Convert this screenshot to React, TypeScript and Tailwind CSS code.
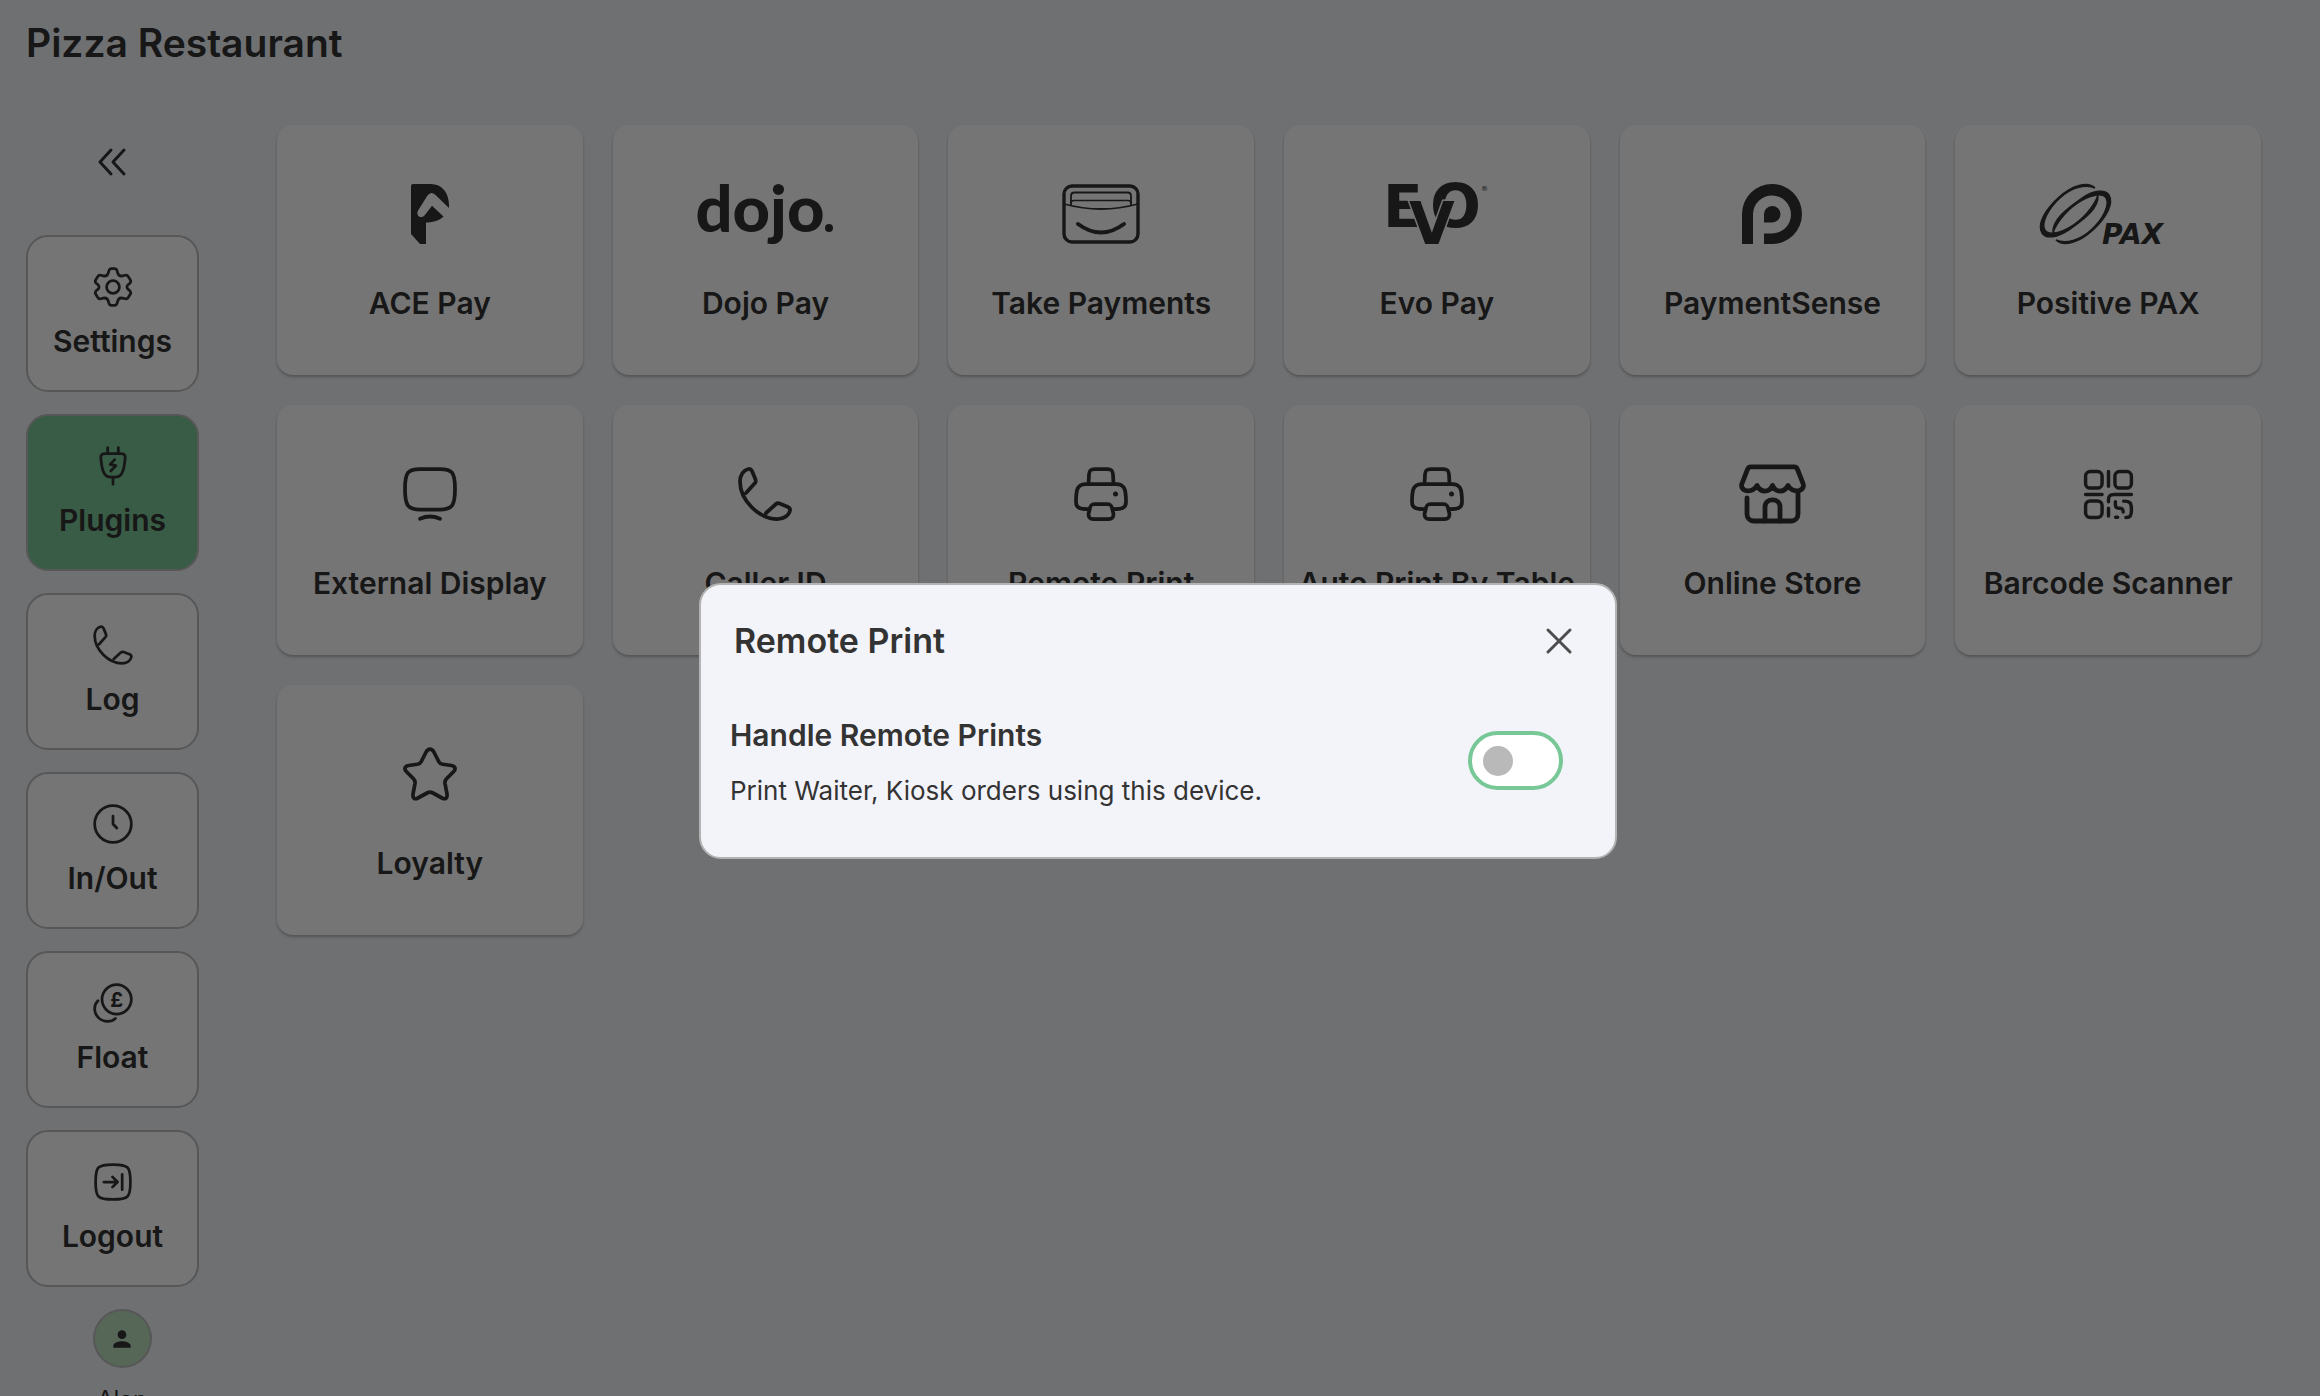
import React, { useState } from 'react';
import clsx from 'clsx';

type IconProps = { className?: string };

const StrokeIcon: React.FC<IconProps & { children: React.ReactNode }> = ({ className, children }) => (
  <svg
    viewBox="0 0 24 24"
    fill="none"
    stroke="currentColor"
    strokeWidth="1.5"
    strokeLinecap="round"
    strokeLinejoin="round"
    aria-hidden="true"
    className={clsx('shrink-0', className)}
  >
    {children}
  </svg>
);

const SettingsIcon = (props: IconProps) => (
  <StrokeIcon {...props}>
    <circle cx="12" cy="12" r="3.5" />
    <path d="M12 2H12.8C13.6 2 14 2.4 14.2 3.1L14.6 4.4C15 5.7 16.1 6.2 17.3 5.9L18.6 5.6C19.4 5.4 19.9 5.6 20.3 6.3L21.4 8C21.9 8.8 21.8 9.3 21.2 9.9L20.2 10.8C19.4 11.5 19.4 12.5 20.2 13.2L21.2 14.1C21.8 14.7 21.9 15.2 21.4 16L20.3 17.7C19.9 18.4 19.4 18.6 18.6 18.4L17.3 18.1C16.1 17.8 15 18.3 14.6 19.6L14.2 20.9C14 21.6 13.6 22 12.8 22H11.2C10.4 22 10 21.6 9.8 20.9L9.4 19.6C9 18.3 7.9 17.8 6.7 18.1L5.4 18.4C4.6 18.6 4.1 18.4 3.7 17.7L2.6 16C2.1 15.2 2.2 14.7 2.8 14.1L3.8 13.2C4.6 12.5 4.6 11.5 3.8 10.8L2.8 9.9C2.2 9.3 2.1 8.8 2.6 8L3.7 6.3C4.1 5.6 4.6 5.4 5.4 5.6L6.7 5.9C7.9 6.2 9 5.7 9.4 4.4L9.8 3.1C10 2.4 10.4 2 11.2 2Z" />
  </StrokeIcon>
);

const PlugIcon = (props: IconProps) => (
  <StrokeIcon {...props}>
    <path d="M9.1 2V5M14.9 2V5M12 18V22" />
    <path d="M8 5.2H16C18 5.2 18.8 5.8 18.6 8C18.2 12.5 17.5 18 13.5 18H10.5C6.5 18 5.8 12.5 5.4 8C5.2 5.8 6 5.2 8 5.2Z" />
    <path d="M12.9 8.5L10.4 11.1L13.6 11.8L10.8 14.7" />
  </StrokeIcon>
);

const PhoneIcon = (props: IconProps) => (
  <StrokeIcon {...props}>
    <path d="M4.4 11.6L8 7.6C8.4 7.1 8.4 6.8 8.2 6.2L6.9 3C6.6 2.4 6.2 1.8 5.4 2C3.4 2.4 2 4.5 2 7C2 14.5 9.5 22 17 22C19.5 22 21.6 20.6 22 18.6C22.2 17.8 21.6 17.4 21 17.1L17.8 15.8C17.2 15.6 16.9 15.6 16.4 16L12.4 19.6" />
  </StrokeIcon>
);

const ClockIcon = (props: IconProps) => (
  <StrokeIcon {...props}>
    <circle cx="12" cy="12" r="10" />
    <path d="M12 7.7V12L14.1 14.2" />
  </StrokeIcon>
);

const CoinsIcon = (props: IconProps) => (
  <StrokeIcon {...props}>
    <circle cx="14" cy="10" r="8" />
    <path d="M3.8 10.8C2.6 12 2 13.4 2 15C2 18.9 5.1 22 9 22C10.6 22 12.1 21.5 13.3 20.4" />
    <text x="14" y="14" textAnchor="middle" fontSize="11" fontWeight="700" fill="currentColor" stroke="none">£</text>
  </StrokeIcon>
);

const LogoutIcon = (props: IconProps) => (
  <StrokeIcon {...props}>
    <path d="M2.5 12C2.5 3.6 3.6 2.5 12 2.5S21.5 3.6 21.5 12S20.4 21.5 12 21.5S2.5 20.4 2.5 12Z" />
    <path d="M7 12H14.5M11.7 9.2L14.5 12L11.7 14.8M17 7.8V16.2" />
  </StrokeIcon>
);

const DisplayIcon = (props: IconProps) => (
  <StrokeIcon {...props}>
    <path d="M2 10C2 3.2 3.2 2 8 2H16C20.8 2 22 3.2 22 10S20.8 18.2 16 18.2H8C3.2 18.2 2 16.8 2 10Z" />
    <path d="M8 21.9Q12 20.1 16 21.9" />
  </StrokeIcon>
);

const PrinterIcon = (props: IconProps) => (
  <StrokeIcon {...props}>
    <path d="M7 8L7.2 4.2C7.3 2.5 8 2 9.5 2H14.5C16 2 16.7 2.5 16.8 4.2L17 8" />
    <path d="M7 18C4 18 2 17.8 2 15.2C2 10 2.6 8 6 8H18C21.4 8 22 10 22 15.2C22 17.8 20 18 17 18" />
    <path d="M9.7 16H14.3C15.7 16 16.2 16.4 16.4 17.6L17 20C17 21.6 16.4 22 15 22H9C7.6 22 7 21.6 7 20L7.6 17.6C7.8 16.4 8.3 16 9.7 16Z" />
    <circle cx="17.8" cy="12" r="1" fill="currentColor" stroke="none" />
  </StrokeIcon>
);

const QrIcon = (props: IconProps) => (
  <StrokeIcon {...props}>
    <rect x="2" y="2" width="7.2" height="7.2" rx="2" />
    <rect x="14.8" y="2" width="7.2" height="7.2" rx="2" />
    <rect x="2" y="14.8" width="7.2" height="7.2" rx="2" />
    <path d="M12 2V8.4M2 12H9.2M22 12H14.4C12.6 12 12 12.6 12 14.4V15.2M12 18V21.4" />
    <path d="M15 15.2V16.2C15 17.8 15.8 18 16.8 18C18 18 18.4 18.4 18.4 19.6M18.6 14.9C21.4 14.9 22 15.6 22 18.4V19C22 21.4 21.4 22 19.6 22M15.1 21.9H16" />
  </StrokeIcon>
);

const StarIcon = (props: IconProps) => (
  <StrokeIcon {...props}>
    <path d="M12 2C12.7 2 13.1 2.4 13.5 3.1L15.6 7.2C15.9 7.8 16.3 8 17 8.1L20.6 8.6C22.1 8.9 22.5 10 21.4 11.1L18.6 13.9C18 14.5 17.9 15 18 15.8L18.8 20C19 21.7 18.2 22.3 16.8 21.6L13 19.5C12.3 19.1 11.7 19.1 11 19.5L7.2 21.6C5.8 22.3 5 21.7 5.2 20L6 15.8C6.1 15 6 14.5 5.4 13.9L2.6 11.1C1.5 10 1.9 8.9 3.4 8.6L7 8.1C7.7 8 8.1 7.8 8.4 7.2L10.5 3.1C10.9 2.4 11.3 2 12 2Z" />
  </StrokeIcon>
);

const StoreIcon = ({ className }: IconProps) => (
  <svg viewBox="0 0 67 60" fill="none" stroke="currentColor" strokeWidth="4.8" strokeLinecap="round" strokeLinejoin="round" aria-hidden="true" className={className}>
    <path d="M12 2.8H55C57 2.8 58 3.8 58.6 5.6L64.2 20C66 27 55 30.5 49 21.5C45 29 37 29 33.5 21.5C30 29 22 29 18 21.5C12 30.5 1 27 2.8 20L8.4 5.6C9 3.8 10 2.8 12 2.8Z" />
    <path d="M8 34V50C8 54 11 57 15 57H52C56 57 59 54 59 50V28" />
    <path d="M26 57V43C26 33.5 41 33.5 41 43V57" />
  </svg>
);

const AcePayLogo = ({ className }: IconProps) => (
  <svg viewBox="0 0 38 60" fill="currentColor" aria-hidden="true" className={className}>
    <path d="M2 0H20C31 0 38 9 38 21V24L24 10.5Q20 7 16.5 11.5L6.8 27C5 32 9.5 35 13.5 31.5L21 21.8L32.5 32.5C29 36 23 38.5 15 38.5V60H9L0 50V2Q0 0 2 0Z" />
  </svg>
);

const DojoLogo = ({ className }: IconProps) => (
  <svg viewBox="0 0 134 60" fill="currentColor" aria-hidden="true" className={className}>
    <text x="62" y="48" textAnchor="middle" fontFamily="Lato, sans-serif" fontWeight="900" fontSize="65">dojo</text>
    <circle cx="131" cy="44" r="4" />
  </svg>
);

const TakePaymentsLogo = ({ className }: IconProps) => (
  <svg viewBox="0 0 78 60" fill="none" stroke="currentColor" strokeLinecap="round" aria-hidden="true" className={className}>
    <rect x="2" y="2" width="74" height="56" rx="8" strokeWidth="3.4" />
    <path d="M2 20Q39 30 76 20" strokeWidth="1.8" />
    <path d="M9 21V12Q9 8.5 12.5 8.5H65.5Q69 8.5 69 12V21" strokeWidth="1.8" />
    <path d="M9 19Q9 16.5 12 16.5H66Q69 16.5 69 19" strokeWidth="1.6" />
    <path d="M16 40Q39 57 62 40" strokeWidth="4" />
  </svg>
);

const EvoLogo = ({ className }: IconProps) => (
  <svg viewBox="0 0 98 60" fill="currentColor" fontFamily="'DejaVu Sans', sans-serif" fontWeight="700" aria-hidden="true" className={className}>
    <text x="-5" y="43" fontSize="58">E</text>
    <text x="42" y="43" fontSize="60">O</text>
    <text x="21" y="60" fontSize="59" stroke="white" strokeWidth="3" paintOrder="stroke">V</text>
    <text x="93" y="7" fontSize="7" fontWeight="400">®</text>
  </svg>
);

const PaymentSenseLogo = ({ className }: IconProps) => (
  <svg viewBox="0 0 60 60" fill="currentColor" aria-hidden="true" className={className}>
    <path d="M22 60H30A30 30 0 1 0 0 30V60H11V30A19 19 0 1 1 30 49.5H22Z" />
    <path d="M22 38.5V30.5A8.25 8.25 0 1 1 30.2 38.5Z" />
  </svg>
);

const PaxLogo = ({ className }: IconProps) => {
  const swoosh = 'M55 4C48 -3 32 1 18 14C4 27 -3 41 2 49C6 55 17 54 29 46C46 34 59 24 58 11C54 23 42 36 30 43C18 50 8 51 5 46C1 39 8 25 20 14C32 3 46 0 55 4Z';
  return (
    <svg viewBox="0 0 136 60" fill="currentColor" aria-hidden="true" className={className}>
      <path d={swoosh} stroke="currentColor" strokeWidth="1.4" />
      <path d={swoosh} stroke="currentColor" strokeWidth="1.4" transform="rotate(180 35.5 30)" />
      <text x="62" y="60" fontFamily="'DejaVu Sans', sans-serif" fontWeight="700" fontStyle="italic" fontSize="28">PAX</text>
    </svg>
  );
};

const menu = [
  { label: 'Settings', icon: SettingsIcon },
  { label: 'Plugins', icon: PlugIcon },
  { label: 'Log', icon: PhoneIcon },
  { label: 'In/Out', icon: ClockIcon },
  { label: 'Float', icon: CoinsIcon },
  { label: 'Logout', icon: LogoutIcon },
];

const plugins = [
  { label: 'ACE Pay', icon: <AcePayLogo className="h-[60px]" /> },
  { label: 'Dojo Pay', icon: <DojoLogo className="h-[60px] overflow-visible" /> },
  { label: 'Take Payments', icon: <TakePaymentsLogo className="h-[60px]" /> },
  { label: 'Evo Pay', icon: <EvoLogo className="h-[60px] overflow-visible" /> },
  { label: 'PaymentSense', icon: <PaymentSenseLogo className="h-[60px]" /> },
  { label: 'Positive PAX', icon: <PaxLogo className="h-[60px] overflow-visible" /> },
  { label: 'External Display', icon: <DisplayIcon className="size-[60px]" /> },
  { label: 'Caller ID', icon: <PhoneIcon className="size-[60px]" /> },
  { label: 'Remote Print', icon: <PrinterIcon className="size-[60px]" /> },
  { label: 'Auto Print By Table', icon: <PrinterIcon className="size-[60px]" /> },
  { label: 'Online Store', icon: <StoreIcon className="h-[60px]" /> },
  { label: 'Barcode Scanner', icon: <QrIcon className="size-[55px]" /> },
  { label: 'Loyalty', icon: <StarIcon className="size-[60px]" /> },
];

const App: React.FC = () => {
  const [active, setActive] = useState('Plugins');
  const [open, setOpen] = useState(true);
  const [remotePrints, setRemotePrints] = useState(false);

  return (
    <div className="h-screen overflow-hidden bg-[#f1f4f8] font-[Inter,sans-serif] text-[#333333]">
      <header className="flex h-[86px] items-center px-[26px]">
        <h1 className="text-[39px] font-semibold">Pizza Restaurant</h1>
      </header>

      <div className="flex gap-[78px] pt-[39px] pr-[59px] pl-[26px]">
        <aside className="w-[173px] shrink-0">
          <button type="button" aria-label="Collapse menu" className="mb-9 flex h-[74px] w-full items-center justify-center">
            <StrokeIcon className="size-12">
              <path d="M11 6L5.5 12L11 18M17.5 6L12 12L17.5 18" />
            </StrokeIcon>
          </button>
          <nav className="flex flex-col gap-[22px]">
            {menu.map(({ label, icon: Icon }) => (
              <button
                key={label}
                type="button"
                onClick={() => setActive(label)}
                className={clsx(
                  'flex h-[157px] flex-col items-center gap-3.5 rounded-[22px] border-2 border-[#bdbdbd] pt-7',
                  active === label ? 'bg-[#7cc899]' : 'bg-white'
                )}
              >
                <Icon className="size-11" />
                <span className="text-[30px] leading-9 font-semibold">{label}</span>
              </button>
            ))}
          </nav>
          <div className="mt-[22px] flex flex-col items-center pl-[19px]">
            <div className="flex size-[59px] items-center justify-center rounded-full border-2 border-[#bdbdbd] bg-[#bbdebe]">
              <svg viewBox="0 0 24 24" fill="currentColor" aria-hidden="true" className="size-[26px]">
                <path d="M12 12c2.21 0 4-1.79 4-4s-1.79-4-4-4-4 1.79-4 4 1.79 4 4 4zm0 2c-2.67 0-8 1.34-8 4v2h16v-2c0-2.66-5.33-4-8-4z" />
              </svg>
            </div>
            <span className="mt-4 text-[24px] leading-8">Alan</span>
          </div>
        </aside>

        <main className="grid flex-1 auto-rows-[250px] grid-cols-6 gap-[30px]">
          {plugins.map((plugin) => (
            <button
              key={plugin.label}
              type="button"
              onClick={() => setOpen(true)}
              className="flex flex-col items-center gap-[41px] rounded-2xl bg-white pt-[59px] shadow-[0_2px_3px_rgba(0,0,0,0.25)]"
            >
              <span className="flex h-[60px] items-center justify-center">{plugin.icon}</span>
              <span className="text-[30px] leading-9 font-semibold whitespace-nowrap">{plugin.label}</span>
            </button>
          ))}
        </main>
      </div>

      {open && (
        <div className="fixed inset-0 flex items-center justify-center bg-black/54 pt-[45px] pr-1">
          <div role="dialog" aria-labelledby="dialog-title" className="h-[276px] w-[918px] rounded-[22px] border-2 border-[#b3b3b3] bg-[#f3f4f9] pt-8 pr-[52px] pl-[29px]">
            <div className="flex h-12 items-center justify-between pl-1">
              <h2 id="dialog-title" className="text-[34px] font-semibold">Remote Print</h2>
              <button type="button" aria-label="Close" onClick={() => setOpen(false)} className="-mr-5 text-[#4d4d4d]">
                <StrokeIcon className="size-12">
                  <path d="M6.5 6.5L17.5 17.5M17.5 6.5L6.5 17.5" />
                </StrokeIcon>
              </button>
            </div>
            <div className="mt-[50px] flex items-center justify-between">
              <label htmlFor="remote-prints">
                <span className="block text-[30px] leading-10 font-semibold">Handle Remote Prints</span>
                <span className="mt-4 block text-[26px] leading-10">Print Waiter, Kiosk orders using this device.</span>
              </label>
              <input
                id="remote-prints"
                type="checkbox"
                role="switch"
                checked={remotePrints}
                onChange={(e) => setRemotePrints(e.target.checked)}
                className="mb-1 flex h-[59px] w-[95px] appearance-none items-center rounded-full border-4 border-[#77c896] bg-white px-[11px] before:size-[30px] before:rounded-full before:bg-[#b9b9b9] checked:justify-end checked:before:bg-[#77c896]"
              />
            </div>
          </div>
        </div>
      )}
    </div>
  );
};

export default App;
